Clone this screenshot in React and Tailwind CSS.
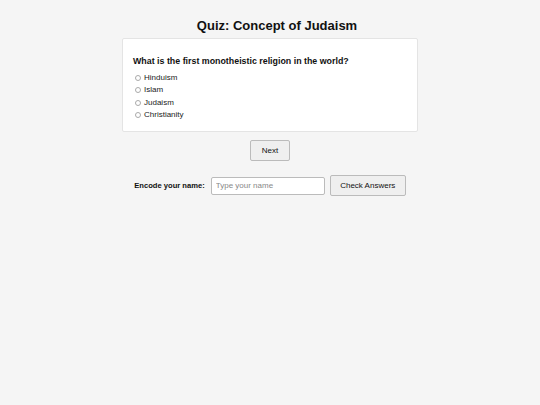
export default function App() {
  const options = ["Hinduism", "Islam", "Judaism", "Christianity"];
  return (
    <div className="min-h-[405px] w-full bg-[#f5f5f5] flex flex-col items-center pt-[17px]" style={{ fontFamily: '"Liberation Sans", Arial, sans-serif' }}>
      <h1 className="ml-[14px] text-[13px] font-bold text-[#111] leading-[18px]">Quiz: Concept of Judaism</h1>
      <div className="mt-[3px] w-[296px] h-[94px] bg-white border border-[#e4e4e4] rounded-[2px] px-[10px] pt-[16px]">
        <p className="text-[8.85px] font-bold text-[#111] leading-[12px]">What is the first monotheistic religion in the world?</p>
        <div className="mt-[5px] flex flex-col">
          {options.map((o) => (
            <label key={o} className="flex items-center h-[12.3px] text-[8px] text-[#222]">
              <span className="ml-[2px] mr-[3px] w-[6px] h-[6px] rounded-full border border-[#aaa] bg-white inline-block"></span>
              {o}
            </label>
          ))}
        </div>
      </div>
      <button className="mt-[8px] w-[40px] h-[21px] bg-[#efefef] border border-[#bbb] rounded-[2px] text-[8px] text-[#111]">Next</button>
      <div className="mt-[14px] flex items-center">
        <span className="text-[7.6px] font-bold text-[#111] mr-[6px]">Encode your name:</span>
        <input className="w-[114px] h-[18px] bg-white border border-[#bbb] rounded-[2px] px-[4px] text-[8px] outline-none placeholder:text-[#888]" placeholder="Type your name" />
        <button className="ml-[5px] w-[76px] h-[21px] bg-[#efefef] border border-[#bbb] rounded-[2px] text-[8px] text-[#111]">Check Answers</button>
      </div>
    </div>
  );
}
